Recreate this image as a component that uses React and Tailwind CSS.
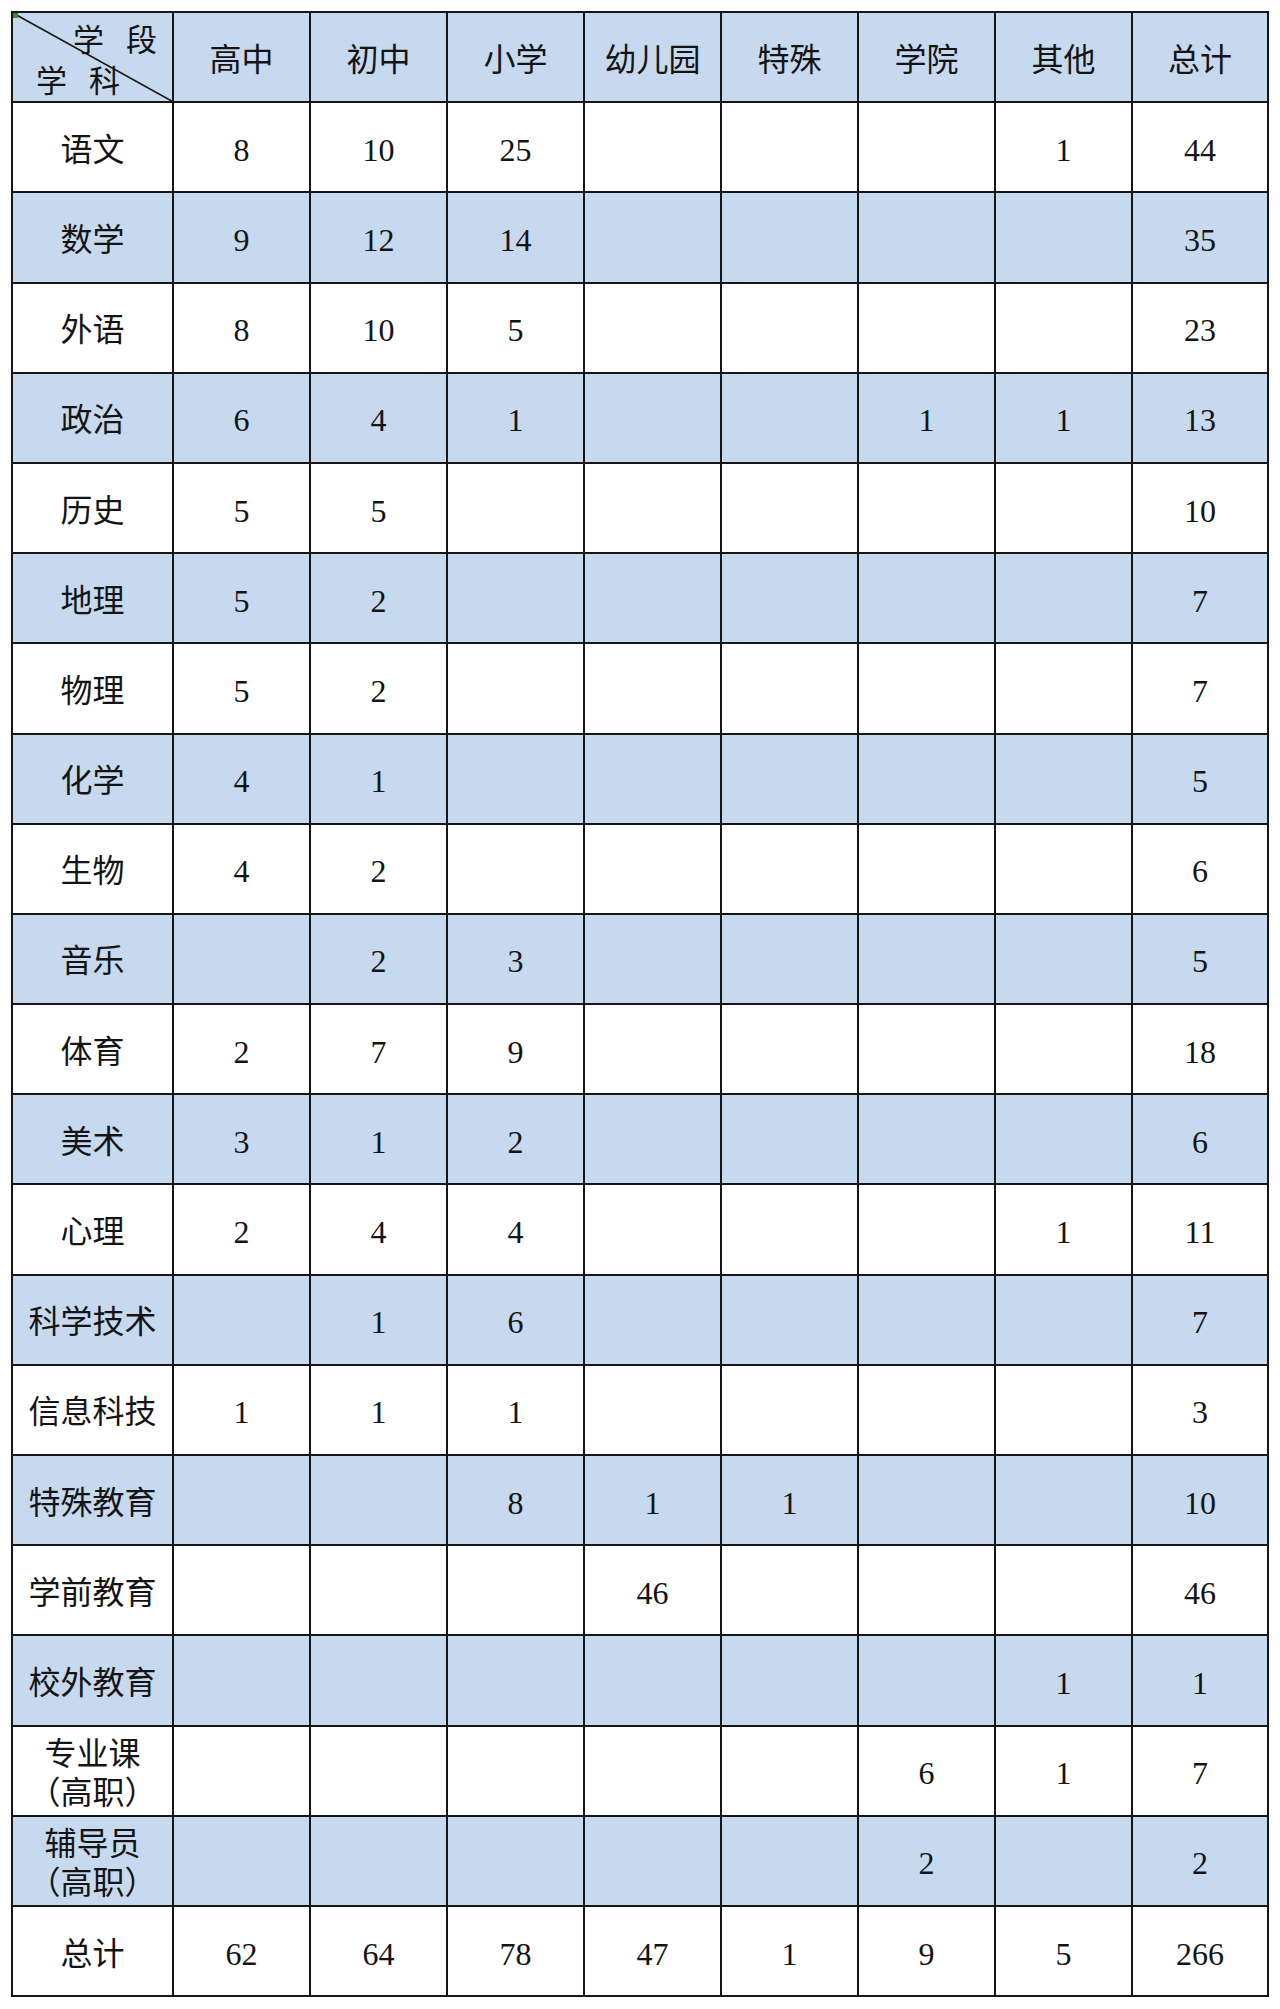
import React from "react";

const columns = ["高中", "初中", "小学", "幼儿园", "特殊", "学院", "其他", "总计"];

const rows = [
  ["语文", "8", "10", "25", "", "", "", "1", "44"],
  ["数学", "9", "12", "14", "", "", "", "", "35"],
  ["外语", "8", "10", "5", "", "", "", "", "23"],
  ["政治", "6", "4", "1", "", "", "1", "1", "13"],
  ["历史", "5", "5", "", "", "", "", "", "10"],
  ["地理", "5", "2", "", "", "", "", "", "7"],
  ["物理", "5", "2", "", "", "", "", "", "7"],
  ["化学", "4", "1", "", "", "", "", "", "5"],
  ["生物", "4", "2", "", "", "", "", "", "6"],
  ["音乐", "", "2", "3", "", "", "", "", "5"],
  ["体育", "2", "7", "9", "", "", "", "", "18"],
  ["美术", "3", "1", "2", "", "", "", "", "6"],
  ["心理", "2", "4", "4", "", "", "", "1", "11"],
  ["科学技术", "", "1", "6", "", "", "", "", "7"],
  ["信息科技", "1", "1", "1", "", "", "", "", "3"],
  ["特殊教育", "", "", "8", "1", "1", "", "", "10"],
  ["学前教育", "", "", "", "46", "", "", "", "46"],
  ["校外教育", "", "", "", "", "", "", "1", "1"],
  [["专业课", "（高职）"], "", "", "", "", "", "6", "1", "7"],
  [["辅导员", "（高职）"], "", "", "", "", "", "2", "", "2"],
  ["总计", "62", "64", "78", "47", "1", "9", "5", "266"],
];

const cellBase =
  "flex items-center justify-center border-r-2 border-b-2 border-[#161616] pt-[5px]";

const Label = ({ value }) =>
  Array.isArray(value) ? (
    <div className="flex flex-col items-center leading-[39px] pt-[2px] [text-spacing-trim:space-all] [font-feature-settings:'halt'_0,'chws'_0]">
      <span>{value[0]}</span>
      <span>{value[1]}</span>
    </div>
  ) : (
    <span>{value}</span>
  );

export default function App() {
  return (
    <div className="bg-white w-[1280px] h-[2009px] pt-[11px] pl-[11px]">
      <div
        className="grid grid-cols-[161px_repeat(7,137px)_136px] auto-rows-[90.2px] w-fit border-l-2 border-t-2 border-[#161616] text-[32px] text-[#141414]"
        style={{
          fontFamily:
            '"Liberation Serif", "Noto Sans CJK SC", "Noto Serif", serif',
        }}
      >
        {/* header */}
        <div className="relative border-r-2 border-b-2 border-[#161616] bg-[#c6d9ef] overflow-hidden">
          <svg
            className="absolute inset-0 w-full h-full"
            viewBox="0 0 159 88"
            preserveAspectRatio="none"
          >
            <line x1="0" y1="0" x2="159" y2="88" stroke="#161616" strokeWidth="1.6" />
          </svg>
          <div className="absolute left-0 top-0 w-[5px] h-[5px] bg-[#3a8a3a]" />
          <div className="absolute left-[60px] top-[12px] flex gap-[22px] text-[31px] leading-none">
            <span>学</span>
            <span>段</span>
          </div>
          <div className="absolute left-[23px] top-[53px] flex gap-[22px] text-[31px] leading-none">
            <span>学</span>
            <span>科</span>
          </div>
        </div>
        {columns.map((c) => (
          <div key={c} className={`${cellBase} bg-[#c6d9ef]`}>
            {c}
          </div>
        ))}

        {rows.map((row, i) => {
          const bg = i % 2 === 1 ? "bg-[#c6d9ef]" : "bg-white";
          return row.map((v, j) => (
            <div key={`${i}-${j}`} className={`${cellBase} ${bg}`}>
              {j === 0 ? <Label value={v} /> : v}
            </div>
          ));
        })}
      </div>
    </div>
  );
}
